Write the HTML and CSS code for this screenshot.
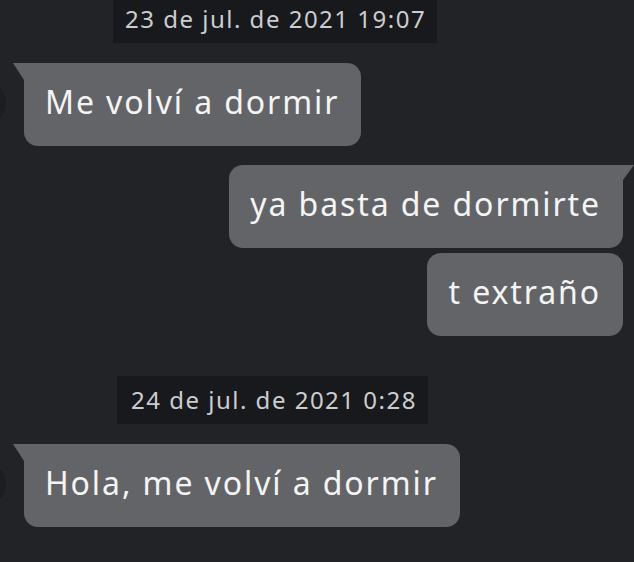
FILE: index.html
```html
<!DOCTYPE html>
<html lang="es">
<head>
<meta charset="utf-8">
<link rel="stylesheet" href="styles.css">
</head>
<body>
<div class="chat">
  <div class="stamp stamp-first">23 de jul. de 2021 19:07</div>
  <div class="row row-in row-first-in">
    <div class="avatar"></div>
    <div class="bubble in">Me volví a dormir</div>
  </div>
  <div class="bubble out out-first">ya basta de dormirte</div>
  <div class="bubble out out-next">t extraño</div>
  <div class="stamp stamp-second">24 de jul. de 2021 0:28</div>
  <div class="row row-in row-second-in">
    <div class="avatar"></div>
    <div class="bubble in">Hola, me volví a dormir</div>
  </div>
</div>
</body>
</html>
```

FILE: styles.css
```css
html, body {
  margin: 0;
  padding: 0;
  background: #222327;
  height: 100%;
  overflow: hidden;
}
.chat {
  display: flex;
  flex-direction: column;
  padding: 0 11px 0 24px;
  font-family: "Noto Sans", "Open Sans", sans-serif;
}
.stamp {
  align-self: flex-start;
  background: #18191c;
  color: #cdcdcf;
  font-size: 24px;
  letter-spacing: 1.5px;
  padding: 0 11px 0 12px;
  box-sizing: border-box;
}
.stamp-first {
  margin-left: 89px;
  height: 43px;
  line-height: 38px;
}
.stamp-second {
  margin-top: 40px;
  margin-left: 93px;
  height: 48px;
  line-height: 48px;
  padding-left: 14px;
}
.row {
  position: relative;
  display: flex;
  align-items: flex-start;
}
.row-first-in { margin-top: 20px; }
.row-second-in { margin-top: 20px; }
.avatar {
  position: absolute;
  left: -62px;
  top: 18px;
  width: 44px;
  height: 44px;
  border-radius: 50%;
  background: #1c1d20;
}
.bubble {
  position: relative;
  background: #636468;
  color: #f4f4f4;
  font-size: 32px;
  letter-spacing: 1.9px;
  height: 83px;
  line-height: 78px;
  padding: 0 22px 0 21px;
  border-radius: 14px;
  box-sizing: border-box;
  white-space: nowrap;
}
.bubble.in {
  border-top-left-radius: 0;
}
.bubble.in::before {
  content: "";
  position: absolute;
  left: -11px;
  top: 0;
  width: 11px;
  height: 17px;
  background: #636468;
  clip-path: polygon(0 0, 100% 0, 100% 100%);
}
.bubble.out {
  align-self: flex-end;
}
.out-first {
  margin-top: 19px;
  border-top-right-radius: 0;
}
.out-first::after {
  content: "";
  position: absolute;
  right: -11px;
  top: 0;
  width: 11px;
  height: 15px;
  background: #636468;
  clip-path: polygon(0 0, 100% 0, 0 100%);
}
.out-next {
  margin-top: 5px;
}
```
